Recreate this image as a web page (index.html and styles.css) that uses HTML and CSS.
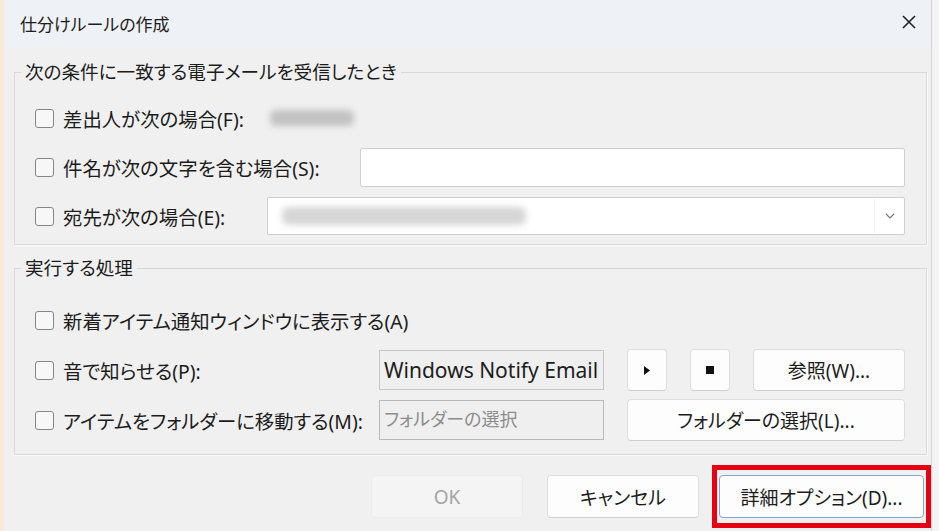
FILE: index.html
```html
<html>

<head>
    <meta charset="utf-8">
    <link rel="stylesheet" href="styles.css">
</head>

<body>
    <div class="dialog">
        <div class="titlebar">
            <span class="title">仕分けルールの作成</span>
            <svg class="close" width="16" height="16" viewBox="0 0 16 16">
                <path d="M2 2 L14 14 M14 2 L2 14" stroke="#222" stroke-width="1.6" fill="none" />
            </svg>
        </div>
        <div class="content">
            <fieldset class="group group-cond">
                <legend>次の条件に一致する電子メールを受信したとき</legend>
                <div class="cond-row">
                    <label class="check"><span class="box"></span>差出人が次の場合(F):</label>
                    <span class="redacted redacted-from"></span>
                </div>
                <div class="cond-row">
                    <label class="check label-subject"><span class="box"></span>件名が次の文字を含む場合(S):</label>
                    <div class="textbox"></div>
                </div>
                <div class="cond-row">
                    <label class="check label-to"><span class="box"></span>宛先が次の場合(E):</label>
                    <div class="combo">
                        <span class="redacted redacted-to"></span>
                        <span class="combo-btn">
                            <svg width="10" height="6" viewBox="0 0 10 6">
                                <path d="M1 1 L5 5 L9 1" stroke="#777" stroke-width="1.2" fill="none" />
                            </svg>
                        </span>
                    </div>
                </div>
            </fieldset>

            <fieldset class="group group-actions">
                <legend>実行する処理</legend>
                <div class="action-grid">
                    <label class="check span-all"><span class="box"></span>新着アイテム通知ウィンドウに表示する(A)</label>

                    <label class="check"><span class="box"></span>音で知らせる(P):</label>
                    <div class="field">Windows Notify Email</div>
                    <button class="btn">
                        <svg width="6" height="9" viewBox="0 0 6 9"><path d="M0 0 L6 4.5 L0 9 Z" fill="#111" /></svg>
                    </button>
                    <button class="btn">
                        <svg width="8" height="8" viewBox="0 0 8 8"><rect width="8" height="8" fill="#111" /></svg>
                    </button>
                    <button class="btn">参照(W)...</button>

                    <label class="check"><span class="box"></span>アイテムをフォルダーに移動する(M):</label>
                    <div class="field placeholder">フォルダーの選択</div>
                    <button class="btn span-3">フォルダーの選択(L)...</button>
                </div>
            </fieldset>

            <div class="footer">
                <button class="btn btn-wide" disabled>OK</button>
                <button class="btn btn-wide">キャンセル</button>
                <div class="highlight">
                    <button class="btn btn-default">詳細オプション(D)...</button>
                </div>
            </div>
        </div>
    </div>
</body>

</html>
```

FILE: styles.css
```css
body {
    margin: 0;
    width: 939px;
    height: 531px;
    overflow: hidden;
    background: linear-gradient(to right, #fbe8d6 4px, #f4f4f4 4px);
    font-family: "Noto Sans", "Noto Sans CJK JP", sans-serif;
    /* 仮名をプロポーショナルに（Meiryo UI 風） */
    font-feature-settings: "palt";
    color: #1c1c1c;
}

.dialog {
    margin-left: 4px;
    width: 927px;
    height: 531px;
    background: #f0f0f0;
    border-right: 1px solid #d4d4d4;
    display: flex;
    flex-direction: column;
}

.titlebar {
    height: 47px;
    background: #eef1f6;
    display: flex;
    align-items: center;
    justify-content: space-between;
    padding: 0 14px 0 16px;
    flex-shrink: 0;
}

.title {
    font-size: 17px;
}

.close {
    margin-top: -3px;
}

.content {
    display: flex;
    flex-direction: column;
}

/* group box */
.group {
    margin: 0 4px 0 10px;
    padding: 16px 21px 8px 20px;
    border: 1px solid #d8d8d8;
    box-shadow: 1px 1px 0 #fbfbfb;
    min-width: 0;
}

.group legend {
    margin-left: -14px;
    padding: 0 4px;
    font-size: 18.6px;
    line-height: 20px;
}

.group-cond {
    margin-top: 15px;
}

.group-actions {
    margin-top: 13px;
    padding-top: 22px;
    padding-bottom: 14px;
}

/* checkbox + label */
.check {
    display: flex;
    align-items: center;
    font-size: 19.4px;
    white-space: nowrap;
}

.box {
    width: 17px;
    height: 17px;
    border: 1px solid #858585;
    border-radius: 3px;
    background: #f7f7f7;
    margin-right: 9px;
    flex-shrink: 0;
}

.cond-row {
    height: 40px;
    display: flex;
    align-items: center;
    margin-bottom: 9px;
}

.cond-row:last-child {
    margin-bottom: 0;
}

.label-subject {
    width: 325px;
}

.label-to {
    width: 232px;
}

.textbox {
    flex: 1;
    height: 37px;
    background: #fff;
    border: 1px solid #cfcfcf;
    border-radius: 2px;
}

.combo {
    flex: 1;
    height: 36px;
    background: #fff;
    border: 1px solid #cfcfcf;
    border-radius: 2px;
    display: flex;
    align-items: center;
    justify-content: space-between;
}

.combo-btn {
    width: 29px;
    height: 34px;
    display: flex;
    align-items: center;
    justify-content: center;
    border-left: 1px solid #f2f2f2;
}

/* blurred personal data */
.redacted {
    display: block;
    border-radius: 6px;
    filter: blur(3px);
}

.redacted-from {
    width: 84px;
    height: 16px;
    margin-left: 26px;
    background: #c2c2c2;
}

.redacted-to {
    width: 244px;
    height: 18px;
    margin-left: 14px;
    background: #d6d6d6;
}

/* actions */
.action-grid {
    display: grid;
    grid-template-columns: minmax(0, 1fr) 225px 40px 40px 152px;
    grid-template-rows: 40px 42px 40px;
    column-gap: 23px;
    row-gap: 9px;
    align-items: center;
}

.span-all {
    grid-column: 1 / -1;
}

.span-3 {
    grid-column: span 3;
}

.field {
    height: 40px;
    box-sizing: border-box;
    border: 1px solid #c6c6c6;
    background: #efefef;
    font-size: 21px;
    padding: 0 4px;
    display: flex;
    align-items: center;
    white-space: nowrap;
    overflow: hidden;
}

.placeholder {
    color: #8c8c8c;
    font-size: 18px;
    border-color: #b9b9b9;
    align-items: flex-start;
    padding-top: 4px;
}

.btn {
    height: 42px;
    background: #fdfdfd;
    border: 1px solid #dedede;
    border-bottom-color: #cfcfcf;
    border-radius: 4px;
    font-family: inherit;
    font-feature-settings: "palt";
    font-size: 19px;
    color: #1c1c1c;
    padding: 0;
    display: flex;
    align-items: center;
    justify-content: center;
}

/* footer */
.footer {
    margin-top: 10px;
    display: flex;
    align-items: center;
    justify-content: flex-end;
}

.btn-wide {
    width: 152px;
    height: 43px;
    margin-right: 24px;
}

.btn-wide + .btn-wide {
    margin-right: 13px;
}

.btn:disabled {
    background: #f4f4f4;
    border-color: #ececec;
    color: #a3a3a3;
}

.highlight {
    border: 5px solid #e60012;
    padding: 5px 2px;
}

.btn-default {
    width: 205px;
    height: 43px;
    border: 1px solid #7fa6d6;
}
```
